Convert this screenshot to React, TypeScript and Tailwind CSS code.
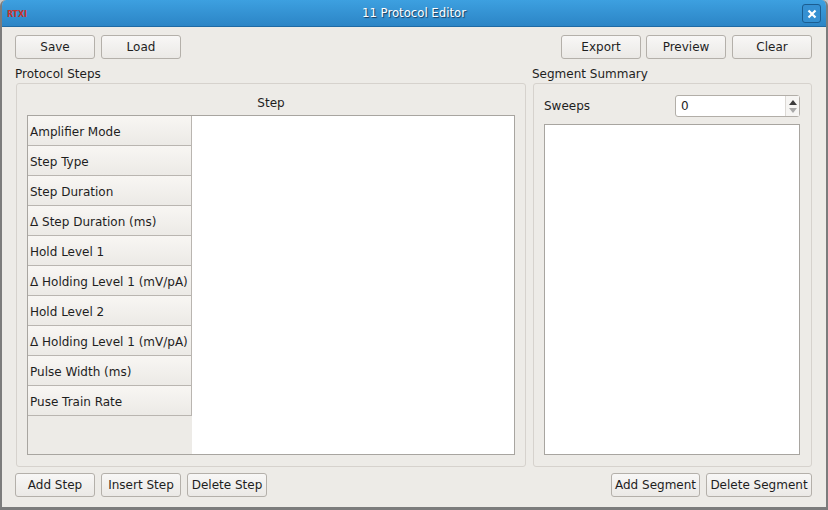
const font = { fontFamily: '"DejaVu Sans", "Liberation Sans", sans-serif' };

const rows = [
  'Amplifier Mode',
  'Step Type',
  'Step Duration',
  'Δ Step Duration (ms)',
  'Hold Level 1',
  'Δ Holding Level 1 (mV/pA)',
  'Hold Level 2',
  'Δ Holding Level 1 (mV/pA)',
  'Pulse Width (ms)',
  'Puse Train Rate',
];

function Btn({ label, w }: { label: string; w: string }) {
  return (
    <button
      className={`${w} h-[24px] rounded-[3px] border border-[#b4b0aa] bg-gradient-to-b from-[#f8f7f6] to-[#ebe9e6] text-[12px] text-[#1e1e1e] leading-none`}
    >
      {label}
    </button>
  );
}

export default function App() {
  return (
    <div className="w-[828px] h-[510px] bg-[#c9c9c9]" style={font}>
      <div className="flex h-full flex-col overflow-hidden rounded-t-[6px] border-x-2 border-b-[3px] border-[#7c7c7c]">
        {/* Title bar */}
        <div className="relative flex h-[27px] shrink-0 items-center justify-center border-b border-[#1f6aa4] bg-gradient-to-b from-[#3da0e0] to-[#2c85c6]">
          <span
            className="absolute left-[5px] top-[10px] text-[9px] font-bold leading-none tracking-tight text-[#c8322a]"
            style={{ fontFamily: '"DejaVu Sans Condensed", "DejaVu Sans", sans-serif' }}
          >
            RTXI
          </span>
          <span
            className="text-[13px] text-white [text-shadow:1px_1px_1px_#1a3c5c]"
            style={{ fontFamily: '"DejaVu Sans Condensed", "DejaVu Sans", sans-serif' }}
          >
            11 Protocol Editor
          </span>
          <div className="absolute right-[5px] top-[4px] flex h-[19px] w-[19px] items-center justify-center rounded-[3px] border border-[#1b5d90] bg-[#3590d2]">
            <svg width="10" height="10" viewBox="0 0 10 10">
              <path d="M1.5 1.5 L8.5 8.5 M8.5 1.5 L1.5 8.5" stroke="white" strokeWidth="2.2" />
            </svg>
          </div>
        </div>

        {/* Body */}
        <div className="flex flex-1 flex-col bg-[#edebe7] pl-[13px] pr-[14px] pt-[8px] text-[12px] text-[#1e1e1e]">
          <div className="flex justify-between">
            <div className="flex gap-[6px]">
              <Btn label="Save" w="w-[80px]" />
              <Btn label="Load" w="w-[80px]" />
            </div>
            <div className="flex">
              <Btn label="Export" w="w-[80px]" />
              <div className="w-[5px]" />
              <Btn label="Preview" w="w-[80px]" />
              <div className="w-[6px]" />
              <Btn label="Clear" w="w-[80px]" />
            </div>
          </div>

          <div className="mt-[7px] flex gap-[6px]">
            {/* Protocol Steps */}
            <div className="flex w-[511px] flex-col">
              <div className="h-[16px] leading-[16px]">Protocol Steps</div>
              <div className="ml-[1px] mt-[1px] flex h-[384px] flex-col rounded-[3px] border border-[#d6d2cd] px-[10px] pb-[11px] pt-[10px]">
                <div className="h-[18px] text-center leading-[18px]">Step</div>
                <div className="mt-[3px] flex flex-1 border border-[#a8a5a0]">
                  <div className="flex w-[164px] flex-col bg-[#edebe7]">
                    {rows.map((r, i) => (
                      <div
                        key={i}
                        className="flex h-[30px] items-center border-b border-r border-[#b9b5b0] bg-gradient-to-b from-[#f8f6f3] to-[#eceae6] pl-[2px] pt-[2px] whitespace-nowrap"
                      >
                        {r}
                      </div>
                    ))}
                  </div>
                  <div className="flex-1 bg-white" />
                </div>
              </div>
            </div>

            {/* Segment Summary */}
            <div className="flex w-[280px] flex-col">
              <div className="h-[16px] leading-[16px]">Segment Summary</div>
              <div className="ml-[1px] mt-[1px] flex h-[384px] flex-col rounded-[3px] border border-[#d6d2cd] pb-[11px] pl-[10px] pr-[11px] pt-[11px]">
                <div className="flex h-[22px] items-center justify-between">
                  <span>Sweeps</span>
                  <div className="flex h-[22px] w-[125px] rounded-[3px] border border-[#b2aea8] bg-white">
                    <span className="flex-1 pl-[5px] leading-[20px]">0</span>
                    <div className="flex w-[14px] flex-col items-center justify-center gap-[3px] border-l border-[#dcd9d5] bg-[#f6f5f3]">
                      <svg width="8" height="5" viewBox="0 0 8 5">
                        <path d="M0 5 L4 0 L8 5 Z" fill="#3c3c3c" />
                      </svg>
                      <svg width="8" height="5" viewBox="0 0 8 5">
                        <path d="M0 0 L4 5 L8 0 Z" fill="#a9a9a9" />
                      </svg>
                    </div>
                  </div>
                </div>
                <div className="mt-[7px] flex-1 border border-[#a8a5a0] bg-white" />
              </div>
            </div>
          </div>

          <div className="mt-[6px] flex justify-between">
            <div className="flex gap-[6px]">
              <Btn label="Add Step" w="w-[80px]" />
              <Btn label="Insert Step" w="w-[80px]" />
              <Btn label="Delete Step" w="w-[80px]" />
            </div>
            <div className="flex gap-[6px]">
              <Btn label="Add Segment" w="w-[89px]" />
              <Btn label="Delete Segment" w="w-[106px]" />
            </div>
          </div>
        </div>
      </div>
    </div>
  );
}
